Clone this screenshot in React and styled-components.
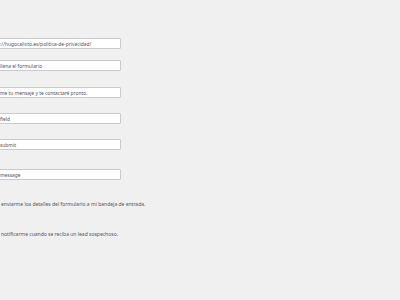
import React from "react";
import styled, { createGlobalStyle } from "styled-components";

const GlobalStyle = createGlobalStyle`
  html, body {
    margin: 0;
    padding: 0;
    background: #f0f0f1;
  }
  body {
    width: 400px;
    height: 300px;
    overflow: hidden;
    font-family: "Noto Sans", "Open Sans", sans-serif;
    color: #3c434a;
  }
`;

const fields = [
  { value: "://hugocalixto.es/politica-de-privacidad/", top: 38 },
  { value: "llena el formulario", top: 11 },
  { value: "me tu mensaje y te contactaré pronto.", top: 16 },
  { value: "field", top: 15 },
  { value: "submit", top: 15 },
  { value: "message", top: 19 },
];

const options = [
  { label: "enviarme los detalles del formulario a mi bandeja de entrada.", top: 21 },
  { label: "notificarme cuando se reciba un lead sospechoso.", top: 23 },
];

const Page = styled.div`
  display: flex;
  flex-direction: column;
  align-items: flex-start;
  width: 400px;
  height: 300px;
`;

const Field = styled.div`
  margin-top: ${(p) => p.$top}px;
  margin-left: -20px;
  width: 141px;
  height: 11px;
  box-sizing: border-box;
  background: #ffffff;
  border: 1px solid #c9cacc;
  border-radius: 1px;
  display: flex;
  align-items: center;
  padding-left: 19px;
  font-size: 4.9px;
  color: #50555b;
  white-space: nowrap;
  overflow: hidden;
`;

const Option = styled.div`
  margin-top: ${(p) => p.$top}px;
  margin-left: 1px;
  font-size: 5px;
  line-height: 7px;
  color: #50575e;
  white-space: nowrap;
`;

const App = () => {
  return (
    <>
      <GlobalStyle />
      <Page>
        {fields.map((f, i) => (
          <Field key={i} $top={f.top}>
            {f.value}
          </Field>
        ))}
        {options.map((o, i) => (
          <Option key={i} $top={o.top}>
            {o.label}
          </Option>
        ))}
      </Page>
    </>
  );
};

export default App;
